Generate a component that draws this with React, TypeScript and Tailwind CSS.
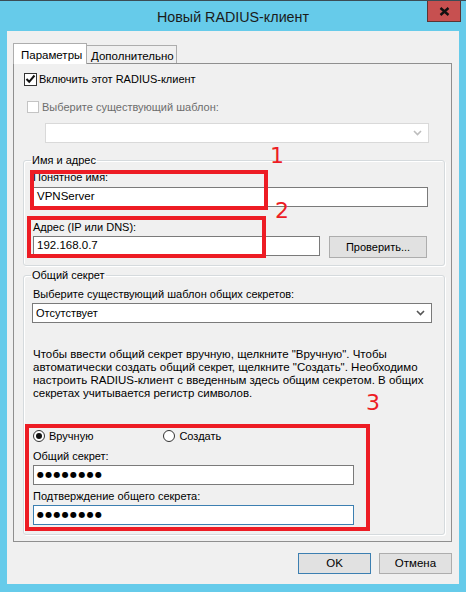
import React from "react"

const font = "font-['Liberation_Sans',Arial,sans-serif]"

const Chevron = ({ color }: { color: string }) => (
    <svg width="9" height="6" viewBox="0 0 9 6">
        <polyline points="1,1 4.5,4.5 8,1" fill="none" stroke={color} strokeWidth="1.6" />
    </svg>
)

const TextBox = ({ value, className }: { value?: string; className: string }) => (
    <div className={`h-[20px] bg-white border flex items-center pl-[3px] text-[11.5px] text-black ${className}`}>
        {value}
    </div>
)

const Dots = () => (
    <span className="font-['DejaVu_Sans',sans-serif] text-[8px] tracking-[1.3px] text-black leading-none">●●●●●●●●</span>
)

const Annot = ({ className }: { className: string }) => (
    <div className={`absolute border-[4px] border-[#ed1c24] ${className}`} />
)

const Num = ({ n, className }: { n: string; className: string }) => (
    <div className={`absolute text-[#ed1c24] text-[22px] leading-none font-['DejaVu_Sans',sans-serif] ${className}`}>{n}</div>
)

export default function App() {
    return (
        <div className={`${font} relative w-[466px] h-[592px] bg-[#66cbea] border-t border-[#3b4c55] overflow-hidden`}>
            {/* title bar */}
            <div className="h-[30px] flex items-center justify-center">
                <span className="text-[14.3px] text-[#1b1b1b] pt-[4px]">Новый RADIUS-клиент</span>
            </div>
            <div className="absolute right-[5px] top-0 w-[34px] h-[21px] bg-[#c75050] border border-[#5a3434] border-t-0 flex items-center justify-center">
                <svg width="11" height="9" viewBox="0 0 11 9">
                    <path d="M1.5 1 L9.5 8 M9.5 1 L1.5 8" stroke="#111" strokeWidth="2.4" />
                </svg>
            </div>

            {/* client area */}
            <div className="mx-[7px] w-[452px] h-[553px] bg-[#f0f0f0] pt-[12px] pl-[6px] text-[11px] text-black">
                {/* tabs */}
                <div className="flex items-end h-[20px]">
                    <div className="w-[74px] h-[21px] bg-white border border-[#adadad] border-b-0 pl-[7px] pt-[3px] relative z-10 -mb-px text-[11.5px]">
                        Параметры
                    </div>
                    <div className="w-[90px] h-[18px] bg-[#f0f0f0] border border-[#adadad] border-l-0 border-b-0 pl-[4px] pt-[2px] text-[11.5px]">
                        Дополнительно
                    </div>
                </div>

                {/* tab panel */}
                <div className="w-[439px] h-[479px] border border-[#8f8f8f] bg-[#f0f0f0]">
                    <div className="pt-[7px] pl-[10px] h-[16px] box-content flex items-center gap-[2px]">
                        <div className="w-[13px] h-[13px] bg-white border border-[#333] flex items-center justify-center">
                            <svg width="11" height="10" viewBox="0 0 11 10">
                                <path d="M1.5 5 L4.2 7.8 L9.5 1.5" fill="none" stroke="#111" strokeWidth="2" />
                            </svg>
                        </div>
                        <span>Включить этот RADIUS-клиент</span>
                    </div>
                    <div className="mt-[12px] pl-[13px] h-[16px] flex items-center gap-[3px] text-[#6d6d6d]">
                        <div className="w-[12px] h-[12px] bg-white border border-[#c4c4c4]" />
                        <span>Выберите существующий шаблон:</span>
                    </div>
                    <div className="mt-[8px] ml-[31px] w-[384px] h-[20px] bg-white border border-[#d9d9d9] flex items-center justify-end pr-[6px]">
                        <Chevron color="#bdbdbd" />
                    </div>

                    {/* Имя и адрес */}
                    <fieldset className="mt-[9px] ml-[9px] w-[422px] border border-[#d5dadd] rounded-[3px] pl-[9px] pb-[7px] shadow-[inset_1px_1px_0_#fff,1px_1px_0_#fff]">
                        <legend className="-ml-[2px] px-[1px] h-[16px] leading-[16px]">Имя и адрес</legend>
                        <div className="mt-[1px] h-[16px] leading-[16px]">Понятное имя:</div>
                        <TextBox value="VPNServer" className="mt-[2px] w-[395px] border-[#7a7a7a]" />
                        <div className="mt-[12px] h-[16px] leading-[16px]">Адрес (IP или DNS):</div>
                        <div className="mt-[1px] flex items-start">
                            <TextBox value="192.168.0.7" className="w-[287px] border-[#7a7a7a]" />
                            <div className="ml-[9px] w-[98px] h-[22px] bg-[#e1e1e1] border border-[#adadad] flex items-center justify-center">
                                Проверить...
                            </div>
                        </div>
                    </fieldset>

                    {/* Общий секрет */}
                    <fieldset className="mt-[1px] ml-[9px] w-[422px] border border-[#d5dadd] rounded-[3px] pl-[9px] pb-[9px] shadow-[inset_1px_1px_0_#fff,1px_1px_0_#fff]">
                        <legend className="-ml-[2px] px-[1px] h-[16px] leading-[16px]">Общий секрет</legend>
                        <div className="mt-[3px] h-[16px] leading-[16px]">Выберите существующий шаблон общих секретов:</div>
                        <div className="mt-[1px] -ml-px w-[400px] h-[20px] bg-white border border-[#7a7a7a] flex items-center justify-between pl-[3px] pr-[6px]">
                            <span>Отсутствует</span>
                            <Chevron color="#555" />
                        </div>
                        <p className="mt-[25px] leading-[13px] text-[11.5px]">
                            Чтобы ввести общий секрет вручную, щелкните "Вручную". Чтобы<br />
                            автоматически создать общий секрет, щелкните "Создать". Необходимо<br />
                            настроить RADIUS-клиент с введенным здесь общим секретом. В общих<br />
                            секретах учитывается регистр символов.
                        </p>
                        <div className="mt-[28px] h-[16px] flex items-center">
                            <div className="w-[12px] h-[12px] rounded-full border border-[#333] bg-white flex items-center justify-center">
                                <div className="w-[6px] h-[6px] rounded-full bg-[#111]" />
                            </div>
                            <span className="ml-[4px]">Вручную</span>
                            <div className="ml-[70px] w-[12px] h-[12px] rounded-full border border-[#333] bg-white" />
                            <span className="ml-[4px]">Создать</span>
                        </div>
                        <div className="mt-[4px] h-[16px] leading-[16px]">Общий секрет:</div>
                        <div className="mt-[1px] w-[321px] h-[20px] bg-white border border-[#7a7a7a] flex items-center pl-[3px]">
                            <Dots />
                        </div>
                        <div className="mt-[3px] h-[16px] leading-[16px]">Подтверждение общего секрета:</div>
                        <div className="mt-[1px] w-[321px] h-[20px] bg-white border border-[#3c7fb1] flex items-center pl-[3px]">
                            <Dots />
                        </div>
                    </fieldset>
                </div>

                {/* buttons */}
                <div className="mt-[11px] pr-[7px] flex justify-end gap-[8px] text-[11.5px]">
                    <div className="w-[73px] h-[21px] bg-[#e1e1e1] border border-[#3c7fb1] flex items-center justify-center">OK</div>
                    <div className="w-[73px] h-[21px] bg-[#e1e1e1] border border-[#adadad] flex items-center justify-center">Отмена</div>
                </div>
            </div>

            {/* annotations */}
            <Annot className="left-[30px] top-[169px] w-[238px] h-[40px]" />
            <Annot className="left-[27px] top-[215px] w-[239px] h-[42px]" />
            <Annot className="left-[25px] top-[423px] w-[345px] h-[107px]" />
            <Num n="1" className="left-[270px] top-[144px]" />
            <Num n="2" className="left-[275px] top-[199px]" />
            <Num n="3" className="left-[366px] top-[391px]" />
        </div>
    )
}
